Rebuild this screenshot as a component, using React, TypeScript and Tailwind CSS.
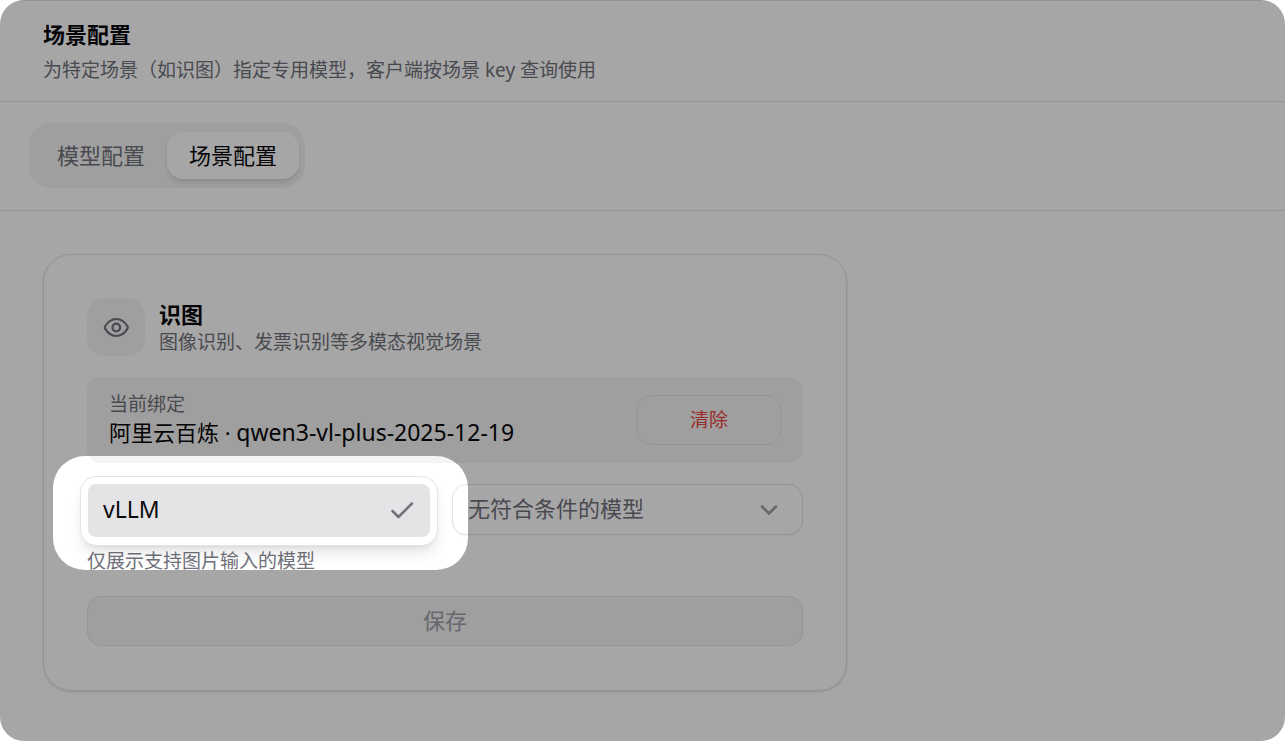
import { ChevronDown } from "lucide-react";

const tabs = [
  { id: "model", label: "模型配置" },
  { id: "scene", label: "场景配置" },
];

const activeTab = "scene";

function EyeIcon() {
  return (
    <svg viewBox="0 0 28 28" className="size-7 text-zinc-500" fill="none" stroke="currentColor" strokeWidth="2.2" strokeLinejoin="round" aria-hidden="true">
      <path d="M3.2 15.8a2.4 2.4 0 0 1 0-2.600C5.800 8.800 9.600 6 14.300 6s8.500 2.800 11.100 7.200a2.400 2.400 0 0 1 0 2.600C22.800 20.200 19 23 14.300 23S5.800 20.200 3.200 15.800Z" />
      <circle cx="14.300" cy="14.500" r="3.800" />
    </svg>
  );
}

function CheckIcon() {
  return (
    <svg viewBox="0 0 28 28" className="size-7 text-zinc-500" fill="none" stroke="currentColor" strokeWidth="2.5" strokeLinecap="round" strokeLinejoin="round" aria-hidden="true">
      <path d="M4.500 14 10.500 20 24 6.500" />
    </svg>
  );
}

function PageHeader() {
  return (
    <header className="border-y border-zinc-200 px-[43px] pt-[19px] pb-[17px]">
      <h1 className="text-[22px] leading-7 font-bold text-zinc-950">场景配置</h1>
      <p className="mt-2 text-[19px] leading-7 text-zinc-500">
        为特定场景（如识图）指定专用模型，客户端按场景 key 查询使用
      </p>
    </header>
  );
}

function TabBar() {
  return (
    <nav className="border-b border-zinc-200 px-[29px] pt-[21px] pb-[22px]">
      <div role="tablist" className="inline-flex h-[65px] items-center rounded-[22px] bg-zinc-100 px-1.5 align-top">
        {tabs.map((tab) => (
          <button
            key={tab.id}
            type="button"
            role="tab"
            aria-selected={tab.id === activeTab}
            className={
              tab.id === activeTab
                ? "h-[47px] rounded-2xl bg-white px-[22px] pb-0.5 text-[22px] leading-7 text-zinc-950 shadow-md"
                : "h-[47px] rounded-2xl px-[22px] pb-0.5 text-[22px] leading-7 text-zinc-500"
            }
          >
            {tab.label}
          </button>
        ))}
      </div>
    </nav>
  );
}

function ProviderSelect() {
  return (
    <div className="relative">
      <button
        type="button"
        aria-haspopup="listbox"
        aria-expanded="true"
        aria-label="vLLM"
        className="block h-[51px] w-full rounded-[14px] border border-zinc-200 bg-white"
      />

      {/* Open menu, covers the trigger */}
      <ul
        role="listbox"
        className="absolute -top-2 right-0 -left-[7px] z-10 rounded-2xl border border-zinc-200 bg-white p-[7px] pb-2 shadow-lg"
      >
        <li
          role="option"
          aria-selected="true"
          className="flex h-[53px] items-center justify-between rounded-lg bg-[#e4e4e6] pr-3.5 pl-[15px] text-[23px] leading-7 text-zinc-950"
        >
          <span className="pb-1">vLLM</span>
          <CheckIcon />
        </li>
      </ul>

      {/* Spotlight: everything outside of it is dimmed */}
      <div className="pointer-events-none absolute -top-7 -right-[30px] -bottom-[35px] -left-[34px] z-20 rounded-[32px] shadow-[0_0_0_9999px_rgba(0,0,0,0.35)]" />
    </div>
  );
}

function ModelSelect() {
  return (
    <div className="relative">
      <select
        aria-label="模型"
        className="block h-[51px] w-full appearance-none rounded-[14px] border border-zinc-200 bg-white pr-12 pb-0.5 pl-[15px] text-[22px] text-zinc-500 shadow-xs"
      >
        <option>无符合条件的模型</option>
      </select>
      <ChevronDown
        className="pointer-events-none absolute inset-y-0 right-5 my-auto size-7 text-zinc-400"
        strokeWidth={2.2}
      />
    </div>
  );
}

function SceneCard() {
  return (
    <section className="w-full max-w-[804px] rounded-[28px] border border-zinc-200 bg-white p-[43px] pb-11 shadow-sm">
      <div className="flex items-center gap-[14px]">
        <div className="flex size-[58px] shrink-0 items-center justify-center rounded-[18px] bg-zinc-100">
          <EyeIcon />
        </div>
        <div className="pt-0.5">
          <h2 className="text-[22px] leading-7 font-bold text-zinc-950">识图</h2>
          <p className="text-[19px] leading-7 text-zinc-500">图像识别、发票识别等多模态视觉场景</p>
        </div>
      </div>

      <div className="mt-[21px] flex h-[86px] items-center justify-between rounded-[14px] bg-zinc-100 px-[22px]">
        <div className="pb-1">
          <p className="text-[19px] leading-7 text-zinc-500">当前绑定</p>
          <p className="text-[22px] leading-7 text-zinc-950">
            阿里云百炼 · <span className="text-[23px]">qwen3-vl-plus-2025-12-19</span>
          </p>
        </div>
        <button
          type="button"
          className="h-[50px] w-36 rounded-[14px] border border-zinc-200 text-[19px] text-[#ef4444]"
        >
          清除
        </button>
      </div>

      <div className="mt-[21px] grid grid-cols-2 gap-[14px]">
        <ProviderSelect />
        <ModelSelect />
      </div>
      <p className="mt-3 text-[19px] leading-7 text-zinc-500">仅展示支持图片输入的模型</p>

      <button
        type="button"
        disabled
        className="mt-[21px] block h-[50px] w-full rounded-[14px] border border-zinc-200 bg-zinc-100 pb-0.5 text-[22px] text-zinc-400"
      >
        保存
      </button>
    </section>
  );
}

export default function App() {
  return (
    <div className="relative min-h-screen overflow-hidden rounded-3xl bg-white font-['Noto_Sans','Noto_Sans_CJK_SC',sans-serif]">
      <PageHeader />
      <TabBar />
      <main className="px-[43px] pt-[43px] pb-[49px]">
        <SceneCard />
      </main>
    </div>
  );
}
